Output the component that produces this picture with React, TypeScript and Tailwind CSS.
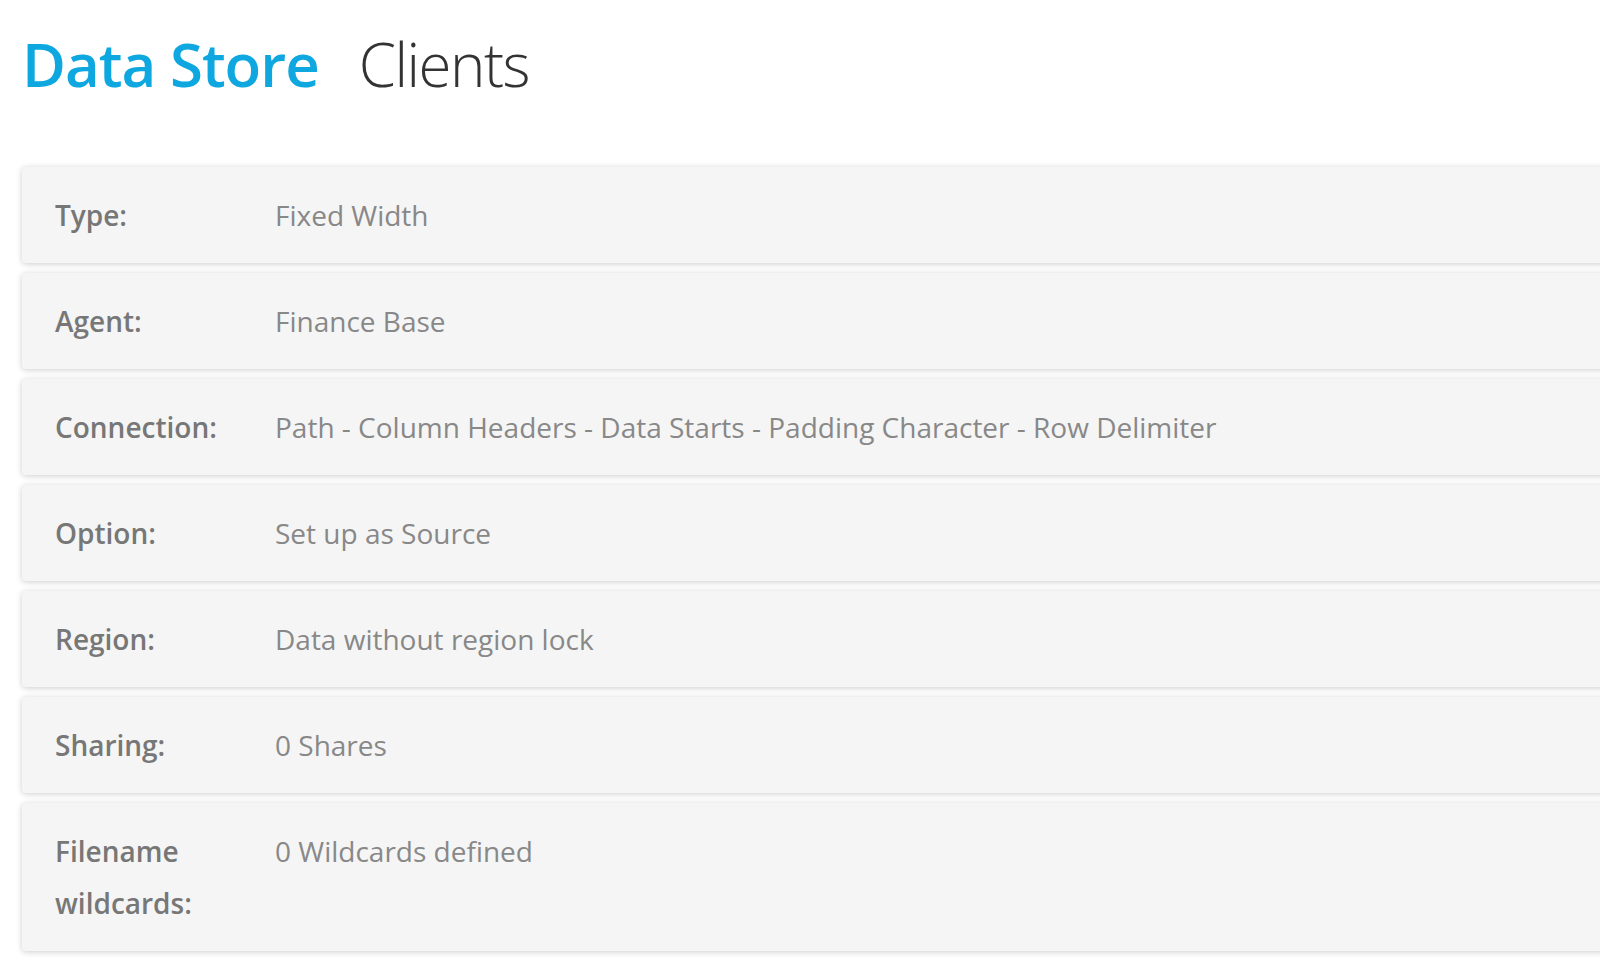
import React from "react";

type Row = { label: string; value: string };

const rows: Row[] = [
  { label: "Type:", value: "Fixed Width" },
  { label: "Agent:", value: "Finance Base" },
  {
    label: "Connection:",
    value: "Path - Column Headers - Data Starts - Padding Character - Row Delimiter",
  },
  { label: "Option:", value: "Set up as Source" },
  { label: "Region:", value: "Data without region lock" },
  { label: "Sharing:", value: "0 Shares" },
  { label: "Filename wildcards:", value: "0 Wildcards defined" },
];

const DetailRow = ({ label, value }: Row) => (
  <div className="flex w-[1620px] rounded-[4px] bg-[#f5f5f5] py-[22px] pl-[33px] shadow-[0_1px_6px_rgba(0,0,0,0.2)]">
    <div className="w-[220px] shrink-0 pr-[24px] font-semibold text-[#777]">{label}</div>
    <div className="text-[#888]">{value}</div>
  </div>
);

export default function App() {
  return (
    <div className="h-[958px] overflow-hidden bg-white font-['Open_Sans',sans-serif]">
      <h1 className="flex items-baseline gap-[40px] pl-[22px] pt-[24px] text-[60px] leading-[80px] tracking-[-1px]">
        <span className="font-semibold text-[#0ea7df]">Data Store</span>
        <span className="font-light tracking-[-1.5px] text-[#333]">Clients</span>
      </h1>
      <div className="mt-[63px] flex flex-col gap-[10px] pl-[22px] text-[28px] leading-[52px]">
        {rows.map((row) => (
          <DetailRow key={row.label} {...row} />
        ))}
      </div>
    </div>
  );
}
